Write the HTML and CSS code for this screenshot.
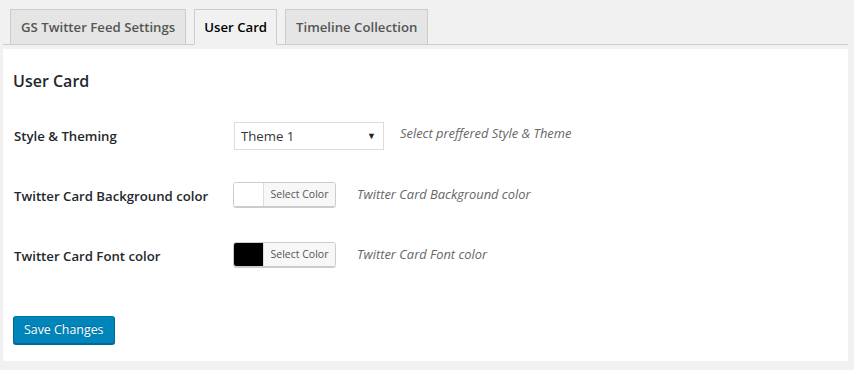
FILE: index.html
```html
<!DOCTYPE html>
<html lang="en">
<head>
<meta charset="utf-8">
<title>User Card</title>
<link rel="stylesheet" href="styles.css">
</head>
<body>
<div class="wrap">
  <nav class="nav-tabs">
    <a class="nav-tab" href="#">GS Twitter Feed Settings</a>
    <a class="nav-tab nav-tab-active" href="#">User Card</a>
    <a class="nav-tab" href="#">Timeline Collection</a>
  </nav>
  <div class="panel">
    <h2 class="panel-title">User Card</h2>
    <div class="form-row">
      <div class="form-label">Style &amp; Theming</div>
      <div class="form-field">
        <div class="select">
          <span class="select-value">Theme 1</span>
          <span class="select-arrow">&#9660;</span>
        </div>
        <span class="desc desc-select">Select preffered Style &amp; Theme</span>
      </div>
    </div>
    <div class="form-row">
      <div class="form-label">Twitter Card Background color</div>
      <div class="form-field">
        <div class="color-picker">
          <span class="swatch swatch-white"></span>
          <span class="color-btn">Select Color</span>
        </div>
        <span class="desc desc-color">Twitter Card Background color</span>
      </div>
    </div>
    <div class="form-row">
      <div class="form-label">Twitter Card Font color</div>
      <div class="form-field">
        <div class="color-picker">
          <span class="swatch swatch-black"></span>
          <span class="color-btn">Select Color</span>
        </div>
        <span class="desc desc-color">Twitter Card Font color</span>
      </div>
    </div>
    <div class="submit-row">
      <button class="button-primary" type="button">Save Changes</button>
    </div>
  </div>
</div>
</body>
</html>
```
FILE: styles.css
```css
* { box-sizing: border-box; }
html, body { margin: 0; padding: 0; }
body {
  background: #f1f1f1;
  font-family: "Open Sans", "Noto Sans", sans-serif;
  color: #23282d;
  font-size: 13px;
}
.wrap {
  width: 845px;
  margin-left: 3px;
}
.nav-tabs {
  display: flex;
  padding-top: 9px;
  padding-left: 7px;
  border-bottom: 1px solid #ccc;
}
.nav-tab {
  display: block;
  margin-right: 8px;
  margin-bottom: -1px;
  padding: 5px 10px;
  line-height: 24px;
  font-size: 13.2px;
  font-weight: 600;
  color: #555;
  background: #e5e5e5;
  border: 1px solid #ccc;
  text-decoration: none;
  white-space: nowrap;
}
.nav-tab-active {
  padding: 5px 9px;
  background: #f1f1f1;
  color: #000;
  border-bottom-color: #f1f1f1;
}
.panel {
  margin-top: 4px;
  background: #fff;
  height: 312px;
  padding: 20px 10px 0 10px;
}
.panel-title {
  margin: 0;
  font-size: 16px;
  font-weight: 600;
  line-height: 24px;
  color: #23282d;
}
.form-row {
  display: flex;
  align-items: center;
  height: 60px;
}
.form-row:first-of-type { margin-top: 13px; }
.form-label {
  width: 220px;
  flex: none;
  padding-left: 1px;
  font-size: 13.2px;
  font-weight: 600;
  color: #23282d;
}
.form-field {
  display: flex;
  align-items: center;
}
.select {
  display: flex;
  align-items: center;
  justify-content: space-between;
  width: 150px;
  height: 28px;
  margin-left: 1px;
  margin-top: -1px;
  padding: 0 7px 0 6px;
  border: 1px solid #ddd;
  background: #fff;
  color: #32373c;
  font-size: 13.2px;
}
.select-arrow {
  font-size: 9px;
  color: #222;
}
.desc {
  font-style: italic;
  font-size: 12.9px;
  color: #666;
  margin-top: -4px;
}
.desc-select { margin-left: 16px; margin-top: -6px; }
.desc-color { margin-left: 21px; }
.color-picker {
  display: flex;
  width: 103px;
  height: 25px;
  border: 1px solid #ccc;
  border-radius: 3px;
  box-shadow: 0 1px 0 #ccc;
  overflow: hidden;
  margin-top: -4px;
}
.swatch {
  width: 29px;
  flex: none;
}
.swatch-white { background: #fff; }
.swatch-black { background: #000; }
.color-btn {
  flex: 1;
  border-left: 1px solid #ddd;
  background: #f7f7f7;
  color: #555;
  font-size: 10.5px;
  line-height: 22px;
  text-align: center;
}
.submit-row {
  margin-top: 30px;
}
.button-primary {
  display: block;
  height: 28px;
  padding: 0 10px;
  background: #0085ba;
  border: 1px solid #0073aa;
  border-color: #0073aa #006799 #006799;
  border-radius: 3px;
  box-shadow: 0 1px 0 #006799;
  color: #fff;
  font-family: "Open Sans", "Noto Sans", sans-serif;
  font-size: 12.4px;
  line-height: 26px;
  text-shadow: 0 -1px 1px #006799;
}
```
